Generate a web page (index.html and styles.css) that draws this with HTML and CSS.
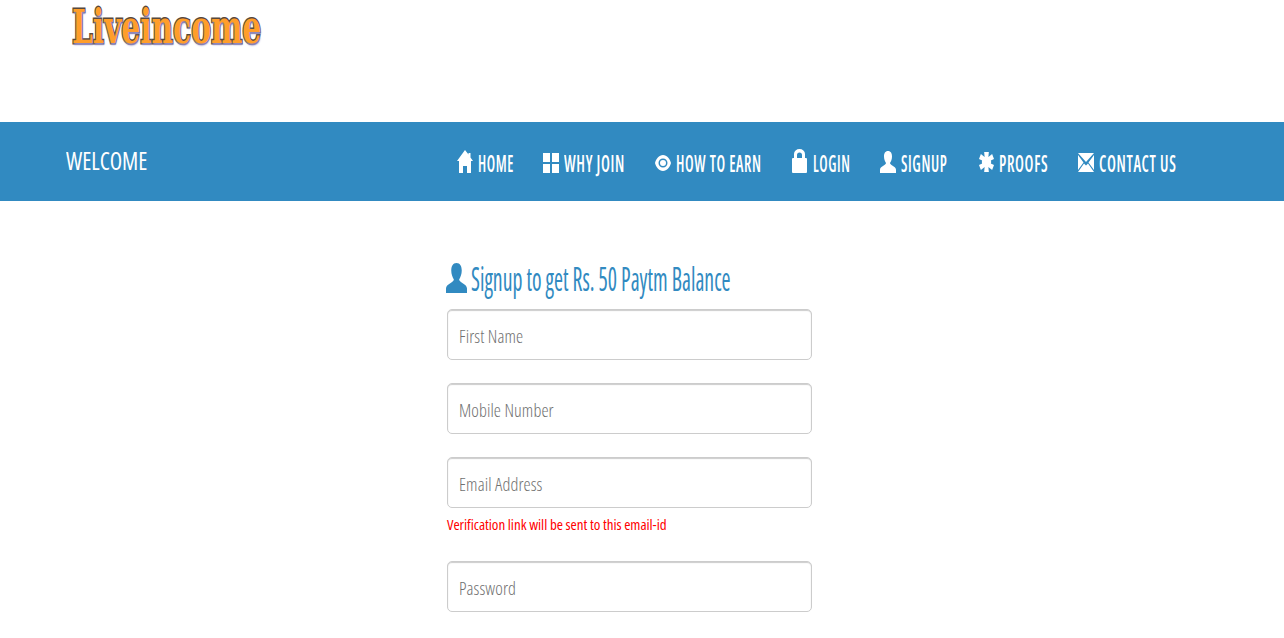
FILE: index.html
```html
<!DOCTYPE html>
<html lang="en">
<head>
<meta charset="utf-8">
<title>Liveincome</title>
<link rel="stylesheet" href="styles.css">
</head>
<body>
<header class="brand"><span class="logo">Liveincome</span></header>
<nav class="bar">
  <span class="welcome"><span class="squeeze">WELCOME</span></span>
  <ul class="menu">
    <li class="item"><svg class="ico ico-home" viewBox="0 0 16 23" preserveAspectRatio="none"><path d="M8 0L11.500 4.500V3H13.500V7.500L16 11H14V23H10V16H6V23H2V11H0Z"/></svg><span class="lbl lbl-home"><span class="squeeze">HOME</span></span></li>
    <li class="item"><svg class="ico ico-why" viewBox="0 0 16 20" preserveAspectRatio="none"><path d="M0 0h7v9h-7zM9 0h7v9h-7zM0 11h7v9h-7zM9 11h7v9h-7z"/></svg><span class="lbl lbl-why"><span class="squeeze">WHY JOIN</span></span></li>
    <li class="item"><svg class="ico ico-eye" viewBox="0 0 16 16" preserveAspectRatio="none"><path fill-rule="evenodd" d="M8 0c4 0 7 4 8 8-1 4-4 8-8 8s-7-4-8-8c1-4 4-8 8-8zM8 3.500a4.500 4.500 0 1 0 0 9a4.500 4.500 0 0 0 0-9zM8 5a3 3 0 1 1 0 6a3 3 0 0 1 0-6z"/></svg><span class="lbl lbl-eye"><span class="squeeze">HOW TO EARN</span></span></li>
    <li class="item"><svg class="ico ico-lock" viewBox="0 0 15 24" preserveAspectRatio="none"><path fill-rule="evenodd" d="M2 9V5a5.500 5 0 0 1 11 0V9h1q1 0 1 1v13q0 1-1 1H1q-1 0-1-1V10q0-1 1-1zM5 9h5V6a2.500 2.500 0 0 0-5 0z"/></svg><span class="lbl lbl-login"><span class="squeeze">LOGIN</span></span></li>
    <li class="item"><svg class="ico ico-user" viewBox="0 0 16 20" preserveAspectRatio="none"><path d="M8 0c2.800 0 4 2.200 4 5 0 2.500-1 4.500-2 6 0 2 6 3 6 6v3h-16v-3c0-3 6-4 6-6-1-1.500-2-3.500-2-6 0-2.800 1.200-5 4-5z"/></svg><span class="lbl lbl-signup"><span class="squeeze">SIGNUP</span></span></li>
    <li class="item"><svg class="ico ico-proofs" viewBox="0 0 16 20" preserveAspectRatio="none"><circle cx="8" cy="10" r="5"/><path d="M5.500 0h5l-.5 5 4-3 2 5-4.500 2v2l4.500 2-2 5-4-3 .5 5h-5l.5-5-4 3-2-5 4.500-2v-2l-4.500-2 2-5 4 3z"/></svg><span class="lbl lbl-proofs"><span class="squeeze">PROOFS</span></span></li>
    <li class="item"><svg class="ico ico-mail" viewBox="0 0 16 19" preserveAspectRatio="none"><path d="M0 0h16L8 9zM0 2l5.500 7.500L0 17zM16 2v15l-5.500-7.500zM6 10.500l2 2 2-2 6 8.500H0z"/></svg><span class="lbl lbl-mail"><span class="squeeze">CONTACT US</span></span></li>
  </ul>
</nav>
<main class="content">
  <form class="form">
    <h2 class="title"><svg class="title-ico" viewBox="0 0 16 20" preserveAspectRatio="none"><path d="M8 0c2.800 0 4 2.200 4 5 0 2.500-1 4.500-2 6 0 2 6 3 6 6v3h-16v-3c0-3 6-4 6-6-1-1.500-2-3.500-2-6 0-2.800 1.200-5 4-5z"/></svg><span class="title-txt"><span class="squeeze">Signup to get Rs. 50 Paytm Balance</span></span></h2>
    <div class="field"><input class="input" placeholder="First Name"></div>
    <div class="field"><input class="input" placeholder="Mobile Number"></div>
    <div class="field field-hint"><input class="input" placeholder="Email Address"><p class="hint">Verification link will be sent to this email-id</p></div>
    <div class="field"><input class="input" placeholder="Password"></div>
  </form>
</main>
</body>
</html>
```
FILE: styles.css
```css
* { box-sizing: border-box; }
html, body { margin: 0; height: 638px; overflow: hidden; background: #fff; }
body { font-family: "Open Sans", "Liberation Sans", sans-serif; }

.squeeze { display: inline-block; white-space: nowrap; transform-origin: 0 50%; transform: scaleX(var(--squeeze)); }

.brand { height: 122px; padding-left: 72px; }
.logo {
  display: inline-block;
  font: 700 46px/54px "DejaVu Serif", serif;
  color: #ff9e2a;
  -webkit-text-stroke: 3px #57483c;
  paint-order: stroke fill;
  text-shadow: 1px 2px 2px #8f8ac4;
  white-space: nowrap;
  transform-origin: 0 0;
  transform: scaleX(.645);
}

.bar {
  height: 79px;
  background: #318ac1;
  display: flex;
  align-items: center;
  justify-content: space-between;
  padding: 0 108px 0 66px;
  color: #fff;
}
.welcome { --squeeze: .91; font-size: 25px; line-height: 30px; font-weight: 400; font-stretch: 75%; width: 81px; margin-top: -3px; }

.menu { display: flex; gap: 30px; list-style: none; margin: 2px 0 0; padding: 0; }
.item { display: flex; align-items: flex-end; height: 26px; }
.ico { display: block; width: 16px; margin-right: 5px; margin-bottom: 3px; fill: #fff; flex: none; }
.ico-home { height: 23px; }
.ico-why { height: 20px; }
.ico-eye { height: 16px; margin-bottom: 5px; }
.ico-lock { width: 15px; height: 24px; margin-right: 6px; }
.ico-user { height: 22px; }
.ico-proofs { width: 15px; height: 20px; margin-bottom: 4px; }
.ico-mail { height: 19px; margin-bottom: 4px; }

.lbl { display: block; font-size: 24px; line-height: 26px; font-weight: 600; font-stretch: 75%; letter-spacing: 1px; }
.lbl-home { width: 35px; --squeeze: .614; }
.lbl-why { width: 61px; --squeeze: .654; }
.lbl-eye { width: 86px; --squeeze: .634; }
.lbl-login { width: 37px; --squeeze: .61; }
.lbl-signup { width: 48px; --squeeze: .63; }
.lbl-proofs { width: 49px; --squeeze: .65; }
.lbl-mail { width: 77px; --squeeze: .653; }

.content { display: flex; padding: 58px 0 0 447px; }
.form { width: 365px; }
.title { display: flex; align-items: center; gap: 4px; margin: 0 0 12px -1px; height: 38px; color: #318ac1; font-weight: 400; }
.title-ico { width: 21px; height: 30px; fill: #318ac1; flex: none; }
.title-txt { --squeeze: .68; font-size: 32px; line-height: 38px; font-stretch: 75%; margin-top: 2px; }

.field { margin-bottom: 23px; }
.field-hint { margin-bottom: 27px; }
.input {
  display: block;
  width: 100%;
  height: 51px;
  border: 1px solid #ccc;
  border-radius: 5px;
  box-shadow: inset 0 1px 1px rgba(0,0,0,.2);
  padding: 2px 11px 0;
  font-family: "Open Sans", sans-serif;
  font-size: 18px;
  font-weight: 300;
  font-stretch: 75%;
  letter-spacing: .1px;
  background: #fff;
  outline: none;
}
.input::placeholder { color: #707070; opacity: 1; }
.hint { margin: 6px 0 0; font-size: 15px; line-height: 20px; font-stretch: 75%; letter-spacing: -.05px; color: #f00; }
```
